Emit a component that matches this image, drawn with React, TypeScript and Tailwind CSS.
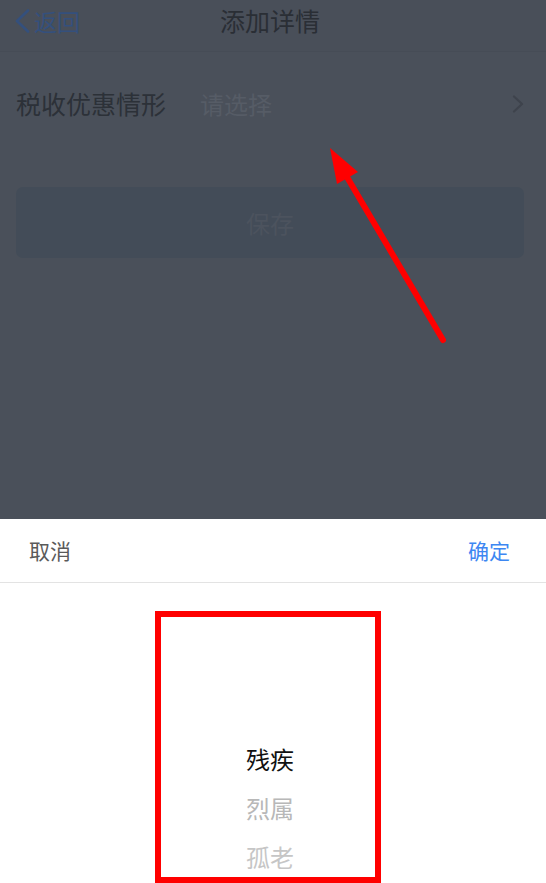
const font = { fontFamily: '"Noto Sans CJK SC", "Noto Sans", sans-serif' };

const options = [
  { label: "残疾", cls: "text-[#111111]" },
  { label: "烈属", cls: "text-[#b8b8b8]" },
  { label: "孤老", cls: "text-[#c6c6c6]" },
];

export default function App() {
  return (
    <div
      className="relative w-[546px] h-[883px] overflow-hidden flex flex-col bg-[#4a505a]"
      style={font}
    >
      {/* Page behind the dimmed overlay */}
      <header className="h-[52px] shrink-0 relative flex items-start justify-center pr-[6px] bg-[#494f59] border-b border-[#464c56]">
        <div className="absolute left-[14px] top-[1px] h-[40px] flex items-center gap-[4px] text-[#34507d]">
          <svg width="16" height="24" viewBox="0 0 16 24" fill="none">
            <polyline points="14,1.5 3,12 14,22.5" stroke="currentColor" strokeWidth="2.6" strokeLinecap="round" strokeLinejoin="round" />
          </svg>
          <span className="text-[23px] leading-[40px]">返回</span>
        </div>
        <span className="text-[25px] leading-[40px] text-[#2a2e35]">添加详情</span>
      </header>

      <div className="flex items-center h-[56px] mt-[24px] pl-[16px] pr-[22px]">
        <span className="text-[25px] text-[#2c3138] w-[184px]">税收优惠情形</span>
        <span className="flex-1 text-[24px] text-[#565c66]">请选择</span>
        <svg width="12" height="18" viewBox="0 0 12 18" fill="none" className="text-[#3e434c]">
          <polyline points="2,1.5 10,9 2,16.5" stroke="currentColor" strokeWidth="2.2" strokeLinecap="round" strokeLinejoin="round" />
        </svg>
      </div>

      <div className="ml-[16px] mr-[22px] mt-[55px] h-[71px] rounded-[7px] bg-[#434c58] flex items-center justify-center">
        <span className="text-[24px] text-[#4c535e]">保存</span>
      </div>

      <div className="flex-1" />

      {/* Bottom picker sheet */}
      <div className="h-[364px] shrink-0 bg-white flex flex-col">
        <div className="h-[64px] flex items-center justify-between pl-[29px] pr-[36px] border-b border-[#e3e3e3]">
          <span className="text-[21px] text-[#5a5a5a]">取消</span>
          <span className="text-[21px] text-[#3d87f2]">确定</span>
        </div>
        <div className="flex-1 flex flex-col items-center pt-[151px] pr-[6px]">
          {options.map((o) => (
            <div key={o.label} className={`h-[49px] flex items-center text-[24px] ${o.cls}`}>
              {o.label}
            </div>
          ))}
        </div>
      </div>

      {/* Annotation: red frame */}
      <div className="absolute left-[155px] top-[611px] w-[226px] h-[272px] border-[6px] border-[#ff0000]" />

      {/* Annotation: red arrow */}
      <svg
        className="absolute left-0 top-0 pointer-events-none"
        width="546"
        height="883"
        viewBox="0 0 546 883"
      >
        <line x1="443" y1="340" x2="344" y2="172" stroke="#ff0000" strokeWidth="6" strokeLinecap="round" />
        <polygon points="330,148 358,172 337,184" fill="#ff0000" />
      </svg>
    </div>
  );
}
